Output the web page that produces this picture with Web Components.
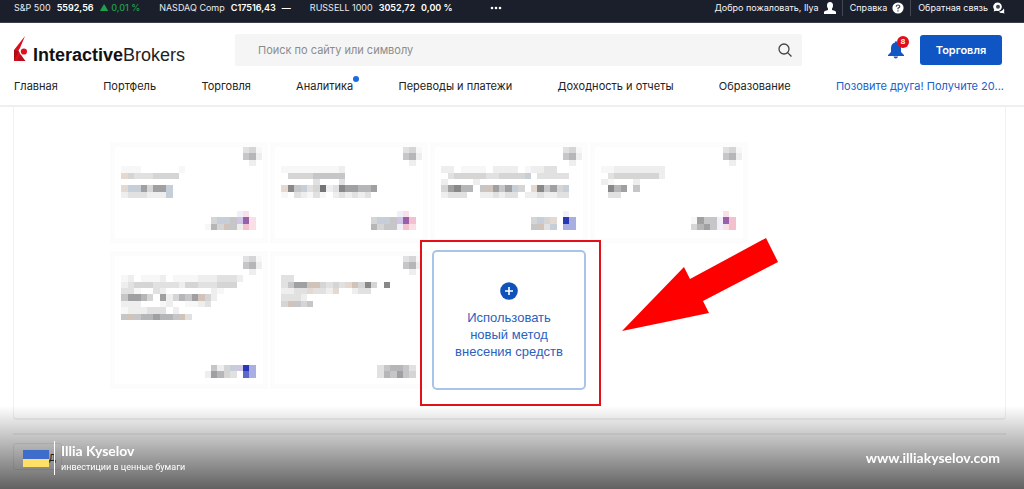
<!DOCTYPE html>
<html lang="ru">
<head>
<meta charset="utf-8">
<meta name="viewport" content="width=device-width, initial-scale=1">
<title>InteractiveBrokers</title>
<style>
body { margin: 0; background: #fff; color: #333; font-family: Inter, "Noto Sans", sans-serif; }
</style>
</head>
<body>
<ib-page></ib-page>
<script>
const define = (name, html, setup) => customElements.define(name, class extends HTMLElement {
  connectedCallback() {
    if (this.shadowRoot) return;
    const root = this.attachShadow({ mode: 'open' });
    const t = document.createElement('template');
    t.innerHTML = html;
    root.append(t.content.cloneNode(true));
    if (setup) setup(this, root);
  }
});

define('ib-quote', `
<style>
:host { display: flex; gap: 6px; color: #fff; font-weight: 600; white-space: nowrap; }
.name { font-weight: 400; color: #e8eaee; }
</style>
<span class="name"><slot name="name"></slot></span><slot></slot>`);

define('ib-ticker', `
<style>
:host { display: flex; justify-content: space-between; height: 22px; background: #1b1f2b; color: #e4e5e8; font: 9px/16px Inter, "Noto Sans", sans-serif; border-bottom: 1px solid #3c404a; padding: 0 19px 0 14px; }
.quotes { display: flex; gap: 19px; }
.up { color: #1fa04a; font-weight: 500; }
button { border: 0; background: none; padding: 0; margin-left: 18px; height: 16px; }
.links { display: flex; }
a { display: flex; gap: 5px; color: #f4f4f6; text-decoration: none; height: 16px; align-items: center; white-space: nowrap; }
a + a { border-left: 1px solid #444853; padding-left: 7px; margin-left: 6px; }
svg { display: block; }
</style>
<div class="quotes">
  <ib-quote><span slot="name">S&amp;P 500</span><span>5592,56</span><span class="up">▲ 0,01 %</span></ib-quote>
  <ib-quote><span slot="name">NASDAQ Comp</span><span>C17516,43</span><span>—</span></ib-quote>
  <ib-quote><span slot="name">RUSSELL 1000</span><span>3052,72</span><span>0,00 %</span></ib-quote>
  <button aria-label="Ещё"><svg width="12" height="4" fill="#fff"><circle cx="2" cy="2" r="1.3"/><circle cx="6" cy="2" r="1.3"/><circle cx="10" cy="2" r="1.3"/></svg></button>
</div>
<div class="links">
  <a href="#">Добро пожаловать, Ilya <svg width="12" height="12" fill="#fff"><ellipse cx="6" cy="3.5" rx="3" ry="3.5"/><path d="M0 12V10Q0 9 4 8V6H8V8Q12 9 12 10V12Z"/></svg></a>
  <a href="#">Справка <svg width="12" height="12"><circle cx="6" cy="6" r="5.6" fill="#fff"/><path d="M4.2 4.7Q4.3 3 6 3Q7.8 3 7.8 4.6Q7.8 5.4 6 6.2V7.2M6 8.2V9.4" fill="none" stroke="#444853" stroke-width="1.2"/></svg></a>
  <a href="#">Обратная связь <svg width="12" height="12"><path d="M10.5 6.5Q12 8 11 9.8L11.5 11.5L9.5 11Q7 11.5 6 9.5Q10 9 10.5 6.5Z" fill="#fff"/><path d="M5 .5A4.3 4.3 0 1 1 3 8.8L.7 9.6L1.2 7.5A4.3 4.3 0 0 1 5 .5Z" fill="#fff"/><circle cx="5" cy="4.8" r="2" fill="#444853"/></svg></a>
</div>`);

define('ib-logo', `
<style>
:host { display: flex; align-items: flex-end; gap: 5px; padding-top: 3px; }
svg { display: block; margin-bottom: 6px; }
span { font: 18px/24px "Liberation Sans", sans-serif; color: #222; }
b { color: #111; }
</style>
<svg width="14" height="25" viewBox="0 0 14 25"><path d="M11 0L6 12L4.5 14.5L11 25H0V14Z" fill="#d8101e"/><path d="M0 14L4.5 15.5L0 25Z" fill="#a90d18"/><path d="M6 18.5L11.5 25H3Z" fill="#b90f1a"/><circle cx="9.6" cy="15.5" r="4" fill="#fff"/><circle cx="9.9" cy="15.5" r="3.1" fill="#e1101e"/></svg>
<span><b>Interactive</b>Brokers</span>`);

define('ib-search', `
<style>
:host { display: block; }
label { display: flex; align-items: center; height: 32px; background: #f5f5f5; padding: 0 10px 0 23px; border-radius: 2px; }
input { flex: 1; min-width: 0; border: 0; background: none; outline: 0; padding: 0; font: 11px/16px Inter, "Noto Sans", sans-serif; color: #333; }
input::placeholder { color: #8c8c8c; opacity: 1; }
</style>
<label><input type="search" aria-label="Поиск" placeholder="Поиск по сайту или символу">
<svg width="14" height="14" fill="none" stroke="#444" stroke-width="1.3"><circle cx="6" cy="6" r="5"/><path d="M9.6 9.6L13.5 13.5"/></svg></label>`);

define('ib-alerts', `
<style>
:host { display: block; }
button { position: relative; display: block; border: 0; background: none; padding: 0; }
svg { display: block; }
span { position: absolute; left: 9px; top: -5px; width: 12px; height: 12px; border-radius: 6px; background: #e20d1b; color: #fff; font: 700 8px/12px "Liberation Sans", sans-serif; text-align: center; }
</style>
<button aria-label="Уведомления"><svg width="16" height="18" fill="#1256c4"><path d="M8 0Q9 0 9 1.5Q13 2.5 13 7V11L16 14V15H0V14L3 11V7Q3 2.5 7 1.5Q7 0 8 0Z"/><path d="M5.5 15.5H10Q9.5 17.5 7.8 17.5Q6 17.5 5.5 15.5Z"/></svg><span>8</span></button>`);

define('ib-header', `
<style>
:host { display: block; border-bottom: 2px solid #efefef; }
.top { display: grid; grid-template: 32px / 221px minmax(0, 1fr) 118px 82px; align-items: center; padding: 11px 22px 0 14px; }
ib-alerts { justify-self: end; margin-right: 16px; }
button { height: 30px; border: 0; border-radius: 3px; background: #0f56c4; color: #fff; font: 600 11px/16px Inter, sans-serif; padding: 0; }
nav { display: flex; justify-content: space-between; padding: 12px 20px 11px 14px; font: 11px/16px Inter, "Noto Sans", sans-serif; height: 16px; }
a { position: relative; color: #222; text-decoration: none; white-space: nowrap; }
a.new::after { content: ""; position: absolute; right: -6px; top: -2px; width: 6px; height: 6px; border-radius: 3px; background: #1c69e2; }
a.promo { color: #2060c8; }
</style>
<div class="top"><ib-logo></ib-logo><ib-search></ib-search><ib-alerts></ib-alerts><button>Торговля</button></div>
<nav><a href="#">Главная</a><a href="#">Портфель</a><a href="#">Торговля</a><a href="#" class="new">Аналитика</a><a href="#">Переводы и платежи</a><a href="#">Доходность и отчеты</a><a href="#">Образование</a><a href="#" class="promo">Позовите друга! Получите 20...</a></nav>`);

/* Saved methods are shown redacted: each character is one mosaic cell. */
const tones = { 1: '#f7f7f7', 2: '#eeeeee', 3: '#e1e1e2', 4: '#d5d5d6', 5: '#c6c6c8', 6: '#b5b6b7', 7: '#a0a0a2', 8: '#888889', 9: '#747477',
  b: '#c6ced8', t: '#e4d9d0', o: '#d0c3ba', p: '#9760a8', k: '#f3c0cd', r: '#f9e0e6', v: '#cfc5e6', n: '#2936b5', l: '#a9afe0', m: '#5e69cc', w: '#f1f0fa' };
const pin = ['....................341', '....................562', '.....................2.'];
const masks = {
  a: [...pin, '.111......1', '.t43334444.', '', '.tbb7477b', '.2333222b', '', '', '...................wr', '...............4bb5vpr', '..............164o52kr'],
  b: [...pin, '.1111111112', '..444455555', '......3...3', '.t85b34923877667', '.1.32131.232323', '', '', '...................wr', '...............4bb5vpk', '...............6455wkr'],
  c: [...pin, '.22.1111.2222.12233', '..344444334444b.33333', '.2....2............', '.47866.5o757b4.t8574b', '.2333..223233.2232233', '', '', '....................w', '...............4b4t.nl', '...............5o3b.ll'],
  d: [...pin, '.1122222222', '..344444442', '.21...2', '..867.5', '..33..', '', '', '....................r', '...............1755wpk', '...............4675wrk'],
  e: [...pin, '.12.1112.11112223332', '.234443333244333444', '.331..32.......21', '.57764.724657o42', '.222...12..1123', '.1222333.2', '.5o5667665o3', '', '', '', '', '', '', '', '...............524bvnl', '..............27643.ml'],
  f: [...pin, '.33', '.3577oo4343to484.8', '.2233t332t..233', '.3332', '.4o545', '', '', '', '', '', '', '', '', '', '................356653', '................365754']
};

define('method-card', `
<style>
:host { display: block; margin: 6px; background: #fff; box-shadow: 0 0 0 5px #fcfcfc; }
svg { display: block; width: 160px; }
</style>
<svg shape-rendering="crispEdges" role="img" aria-label="Сохранённый метод"></svg>`, (host, root) => {
  const svg = root.querySelector('svg'), rows = masks[host.getAttribute('mask')];
  svg.setAttribute('viewBox', `0 0 25 ${rows.length}`);
  rows.forEach((row, y) => [...row].forEach((c, x) => {
    if (!tones[c]) return;
    const r = document.createElementNS('http://www.w3.org/2000/svg', 'rect');
    r.setAttribute('x', x); r.setAttribute('y', y); r.setAttribute('width', 1); r.setAttribute('height', 1);
    r.setAttribute('fill', tones[c]);
    svg.append(r);
  }));
});

define('new-method', `
<style>
:host { display: grid; position: relative; margin: 0 3px; }
button { display: flex; flex-direction: column; align-items: center; justify-content: center; gap: 9px; padding: 2px 0 0; border: 2px solid #a9c4e9; border-radius: 5px; background: #fff; color: #2c5fbe; font: 13px/17px "Liberation Sans", sans-serif; }
svg { display: block; }
.mark { position: absolute; inset: -10px -15px -16px -12px; border: 2px solid #e3101a; pointer-events: none; }
.arrow { position: absolute; left: 190px; top: -12px; pointer-events: none; }
</style>
<button><svg width="18" height="18"><circle cx="9" cy="9" r="8.8" fill="#0f52ba"/><path d="M9 5V13M5 9H13" stroke="#fff" stroke-width="1.6"/></svg><span>Использовать<br>новый метод<br>внесения средств</span></button>
<div class="mark"></div>
<svg class="arrow" width="157" height="94" viewBox="0 0 157 94"><path d="M0 93L62 29L68 41L144 0L156 24L81 63L87 75Z" fill="#f00"/></svg>`);

define('ib-methods', `
<style>
:host { display: grid; grid-template-columns: repeat(4, 160px); grid-template-rows: 103px 140px; row-gap: 6px; margin: 0 18px 0 13px; padding: 34px 0 28px 95px; border: solid #f1f1f1; border-width: 0 1px 2px 1px; border-radius: 0 0 4px 4px; }
</style>
<slot></slot>`);

define('ib-watermark', `
<style>
:host { position: fixed; inset: auto 0 0 0; height: 83px; box-sizing: border-box; display: flex; align-items: flex-start; justify-content: space-between; padding: 35px 24px 0 23px; background: linear-gradient(#0000, #0000009e); color: #fff; font-family: Lato, Roboto, sans-serif; }
.brand { display: flex; align-items: center; }
.flag { width: 26px; height: 17px; background: linear-gradient(#3f6dcb 50%, #ffe066 50%); }
.name { border-left: 1px solid #fff; margin-left: 5px; padding: 0 0 2px 6px; height: 32px; display: flex; flex-direction: column; }
b { font-size: 14px; line-height: 20px; }
small { font-family: Roboto, sans-serif; font-size: 9px; line-height: 12px; }
a { color: #fff; text-decoration: none; font-size: 14px; font-weight: 700; line-height: 20px; margin-top: 7px; }
</style>
<div class="brand"><div class="flag"></div><div class="name"><b>Illia Kyselov</b><small>инвестиции в ценные бумаги</small></div></div>
<a href="#">www.illiakyselov.com</a>`);

define('ib-page', `
<style>
:host { display: block; }
.next { margin: 13px 18px 0 13px; padding-top: 8px; border-top: 2px solid #f1f1f1; }
.next button { height: 27px; padding: 0 5px 0 35px; border: 1px solid #ececec; border-radius: 3px; background: none; color: #333; font: 11px/16px Inter, sans-serif; }
</style>
<ib-ticker></ib-ticker>
<ib-header></ib-header>
<ib-methods>
  <method-card mask="a"></method-card><method-card mask="b"></method-card><method-card mask="c"></method-card><method-card mask="d"></method-card>
  <method-card mask="e"></method-card><method-card mask="f"></method-card><new-method></new-method>
</ib-methods>
<div class="next"><button>д</button></div>
<ib-watermark></ib-watermark>`);
</script>
</body>
</html>
